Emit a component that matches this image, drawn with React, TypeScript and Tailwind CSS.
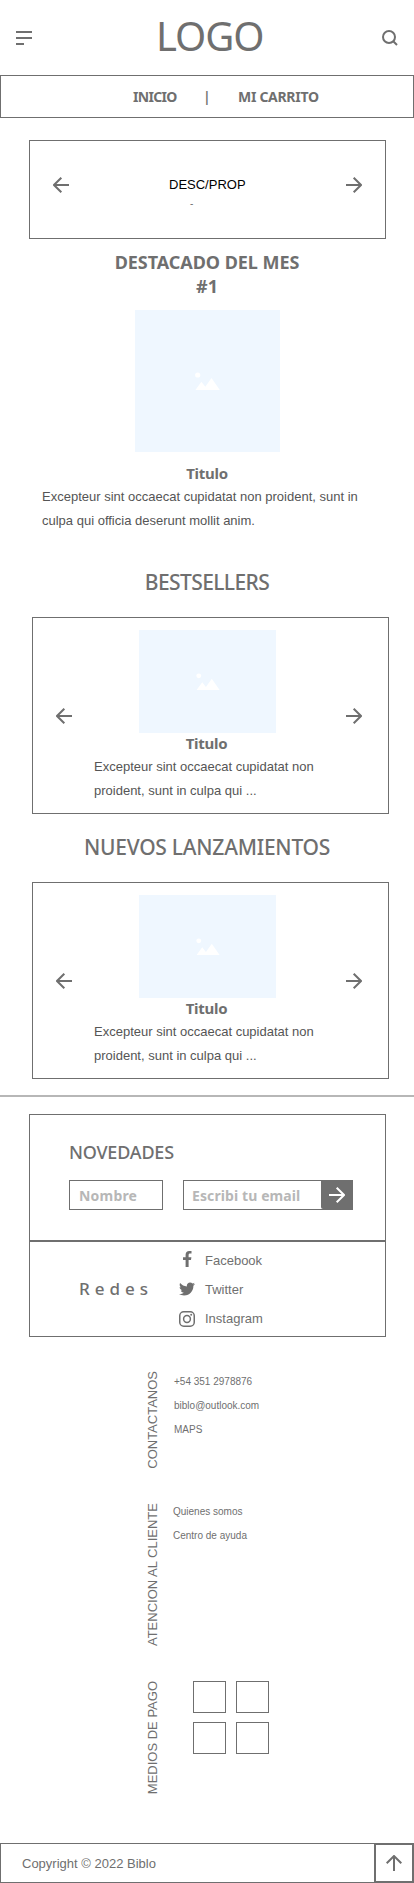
import React from 'react';

const line = 'border-[#6f6f6f]';

function Arrow({ className = '' }: { className?: string }) {
  return (
    <svg className={`block size-4 shrink-0 ${className}`} viewBox="0 0 16 16" fill="none" stroke="currentColor" strokeWidth="2">
      <path d="M0 8h15M7.7 0.7L15 8l-7.3 7.3" />
    </svg>
  );
}

function Placeholder({ className, icon }: { className: string; icon: string }) {
  return (
    <div className={`flex items-center justify-center bg-[#eff7ff] ${className}`}>
      <svg className={icon} viewBox="0 0 25 18" fill="#fff">
        <circle cx="2.7" cy="3" r="2.6" />
        <path d="M0.4 18L6.4 9.8L10.3 14.8L16.5 6L24.8 18z" />
      </svg>
    </div>
  );
}

function Title({ className = '' }: { className?: string }) {
  return (
    <h3 className={`text-center font-['Noto_Sans'] text-[15px] leading-5 font-bold tracking-[-0.25px] ${className}`}>Titulo</h3>
  );
}

function Carousel({ heading, tracking }: { heading: string; tracking: string }) {
  return (
    <section className="flex h-[265px] flex-col">
      <h2 className={`h-[50px] pt-px text-center font-['Noto_Sans'] text-[21px] leading-[29px] font-medium whitespace-nowrap ${tracking}`}>
        {heading}
      </h2>
      <div className={`ml-8 flex h-[197px] w-[357px] border ${line}`}>
        <Arrow className="mt-[90px] ml-[23px] rotate-180" />
        <div className="ml-[22px] w-[226px] pt-3">
          <Placeholder className="ml-[45px] h-[103px] w-[137px]" icon="mb-[1px] h-[17px] w-6" />
          <Title className="mr-[1px]" />
          <p className="pt-[2px] text-[13px] leading-6 whitespace-nowrap text-[#555]">
            Excepteur sint occaecat cupidatat non
            <br />
            proident, sunt in culpa qui ...
          </p>
        </div>
        <Arrow className="mt-[90px] ml-[26px]" />
      </div>
    </section>
  );
}

function Info({ title, className, children }: { title: string; className: string; children: React.ReactNode }) {
  return (
    <section className={`flex pl-[145px] ${className}`}>
      <h4 className="h-fit w-4 rotate-180 text-[13px] leading-4 whitespace-nowrap [writing-mode:vertical-rl]">{title}</h4>
      {children}
    </section>
  );
}

export default function App() {
  return (
    <div className="h-[1883px] w-[414px] overflow-hidden bg-white font-['Liberation_Sans',sans-serif] text-[#6f6f6f]">
      <header className="flex h-[75px] items-center">
        <svg className="ml-4 h-3.5 w-4" viewBox="0 0 16 14" fill="currentColor">
          <path d="M0 0h16v2H0zM0 6h16v2H0zM0 12h8v2H0z" />
        </svg>
        <h1 className="ml-[124px] w-[226px] pb-1 font-['Noto_Sans'] text-[40px] leading-10 tracking-[-1.1px]">LOGO</h1>
        <svg className="h-4 w-4" viewBox="0 0 16 16" fill="none" stroke="currentColor" strokeWidth="2">
          <circle cx="7" cy="7" r="6" />
          <path d="M11 11l4 4" />
        </svg>
      </header>
      <nav className={`flex h-[43px] items-center border pl-[132px] font-['Noto_Sans'] text-sm font-bold whitespace-nowrap ${line}`}>
        <span className="w-[70px] tracking-[-0.7px]">INICIO</span>
        <span className="w-[35px] text-sm font-semibold">|</span>
        <span className="tracking-[-0.3px]">MI CARRITO</span>
      </nav>

      <section className={`mt-[22px] ml-[29px] flex h-[99px] w-[357px] border ${line}`}>
        <Arrow className="mt-9 ml-[23px] rotate-180" />
        <div className="ml-[100px] w-[177px] pt-8">
          <p className="text-[13px] leading-6 text-black">DESC/PROP</p>
          <p className="pl-[21px] text-[10px] leading-[14px]">-</p>
        </div>
        <Arrow className="mt-9" />
      </section>

      <section className="h-[332px] pt-[11px]">
        <h2 className="text-center font-['Noto_Sans'] text-lg leading-6 font-bold tracking-[-0.05px]">
          DESTACADO DEL MES
          <br />
          #1
        </h2>
        <Placeholder className="mt-3 ml-[135px] h-[142px] w-[145px]" icon="h-[18px] w-[25px]" />
        <Title className="mt-[11px]" />
        <p className="pt-[2px] pl-[42px] text-[13px] leading-6 whitespace-nowrap text-[#555]">
          Excepteur sint occaecat cupidatat non proident, sunt in
          <br />
          culpa qui officia deserunt mollit anim.
        </p>
      </section>

      <div className="-mt-1">
        <Carousel heading="BESTSELLERS" tracking="tracking-[-0.6px]" />
        <Carousel heading="NUEVOS LANZAMIENTOS" tracking="tracking-[-0.25px]" />
      </div>
      <hr className="-mt-0.5 border-t-2 border-[#b7b7b7]" />

      <section className={`mt-[17px] ml-[29px] h-[127px] w-[357px] border pl-[39px] ${line}`}>
        <h2 className="pt-[25px] font-['Noto_Sans'] text-lg leading-6 font-medium tracking-[-0.2px]">NOVEDADES</h2>
        <form className="mt-4 flex font-['Noto_Sans'] text-sm leading-7 font-bold whitespace-nowrap text-[#b7b7b7]">
          <div className={`h-[30px] w-[94px] border pl-[9px] pt-px tracking-[0.2px] ${line}`}>Nombre</div>
          <div className={`ml-5 flex h-[30px] w-[170px] justify-between border pl-2 ${line}`}>
            <span className="pt-px tracking-[0.1px]">Escribi tu email</span>
            <button type="button" className="flex w-[31px] items-center justify-center rounded-bl-xs bg-[#6f6f6f] text-white">
              <Arrow />
            </button>
          </div>
        </form>
      </section>
      <section className={`-mt-px ml-[29px] flex h-[97px] w-[357px] border border-t-2 ${line}`}>
        <h2 className="w-[149px] pt-[35px] pl-[49px] font-['Noto_Sans'] text-[17px] leading-6 font-medium tracking-[5px]">Redes</h2>
        <ul className="pt-1 text-[13px] leading-[29px]">
          <li className="flex items-center">
            <svg className="mr-[10px] mb-[3px] h-4 w-4" viewBox="0 0 16 16" fill="currentColor">
              <path d="M6.6 16V9H4V6.2h2.6V3.8C6.6 1.4 8 0 10.2 0c1 0 2.3.1 2.3.1v2.5h-1.3c-1.2 0-1.6.7-1.6 1.5v2.1h2.8L12 9H9.6v7z" />
            </svg>
            Facebook
          </li>
          <li className="flex items-center">
            <svg className="mr-[10px] mb-px h-4 w-4" viewBox="0 0 512 512" fill="currentColor">
              <path d="M459.37 151.716c.325 4.548.325 9.097.325 13.645 0 138.72-105.583 298.558-298.558 298.558-59.452 0-114.680-17.219-161.137-47.106 8.447.974 16.568 1.299 25.340 1.299 49.055 0 94.213-16.568 130.274-44.832-46.132-.975-84.792-31.188-98.112-72.772 6.498.974 12.995 1.624 19.818 1.624 9.421 0 18.843-1.300 27.614-3.573-48.081-9.747-84.143-51.980-84.143-102.985v-1.299c13.969 7.797 30.214 12.670 47.431 13.319-28.264-18.843-46.781-51.005-46.781-87.391 0-19.492 5.197-37.360 14.294-52.954 51.655 63.675 129.300 105.258 216.365 109.807-1.624-7.797-2.599-15.918-2.599-24.040 0-57.828 46.782-104.934 104.934-104.934 30.213 0 57.502 12.670 76.670 33.137 23.715-4.548 46.456-13.320 66.599-25.340-7.798 24.366-24.366 44.833-46.132 57.827 21.117-2.273 41.584-8.122 60.426-16.243-14.292 20.791-32.161 39.308-52.628 54.253z" />
            </svg>
            Twitter
          </li>
          <li className="flex items-center">
            <svg className="mr-[10px] h-4 w-4" viewBox="0 0 16 16" fill="none" stroke="currentColor" strokeWidth="1.5">
              <rect x="0.75" y="0.75" width="14.5" height="14.5" rx="4" />
              <circle cx="8" cy="8" r="3.4" />
              <circle cx="12.2" cy="3.8" r="1" fill="currentColor" stroke="none" />
            </svg>
            Instagram
          </li>
        </ul>
      </section>

      <Info title="CONTACTANOS" className="mt-[34px] h-[132px]">
        <p className="-mt-px ml-[13px] text-[10px] leading-6">
          +54 351 2978876
          <br />
          biblo@outlook.com
          <br />
          MAPS
        </p>
      </Info>
      <Info title="ATENCION AL CLIENTE" className="h-[178px]">
        <p className="-mt-[3px] ml-3 text-[10px] leading-6">
          Quienes somos
          <br />
          Centro de ayuda
        </p>
      </Info>
      <Info title="MEDIOS DE PAGO" className="h-[162px]">
        <div className="ml-8 grid h-fit grid-cols-[33px_33px] gap-x-2.5 gap-y-[9px]">
          {[0, 1, 2, 3].map((n) => (
            <div key={n} className={`h-8 border ${line}`} />
          ))}
        </div>
      </Info>

      <footer className={`flex h-10 items-center justify-between border pl-[21px] text-[13px] ${line}`}>
        <span className="pt-0.5">Copyright © 2022 Biblo</span>
        <a className={`-my-px -mr-px flex h-10 w-10 items-center justify-center border-2 ${line}`}>
          <Arrow className="-rotate-90" />
        </a>
      </footer>
    </div>
  );
}
